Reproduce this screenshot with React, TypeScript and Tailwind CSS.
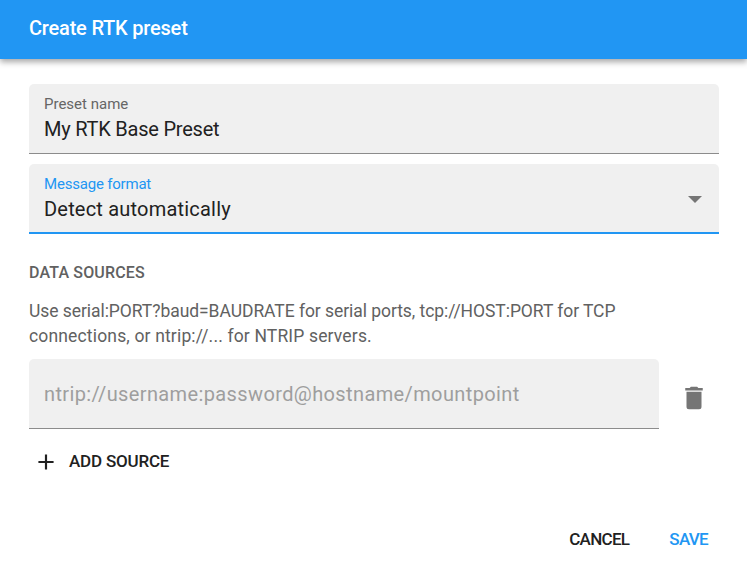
function Field({ label, value, focused, labelClass, valueClass }: { label: string; value: string; focused?: boolean; labelClass?: string; valueClass?: string }) {
  return (
    <div
      className={`h-[70px] rounded-t-[5px] bg-[#f0f0f0] px-[15px] pt-[10px] relative ${
        focused ? "border-b-2 border-[#2196f3]" : "border-b border-[#8c8c8c]"
      }`}
    >
      <div className={`text-[15px] leading-[20px] ${focused ? "text-[#2196f3]" : "text-[#666666]"} ${labelClass ?? ""}`}>{label}</div>
      <div className={`text-[20px] leading-[30px] text-[#212121] ${valueClass ?? ""}`}>{value}</div>
      {focused && <div className="absolute right-[17px] top-[32px] w-0 h-0 border-x-[7px] border-x-transparent border-t-[7px] border-t-[#757575]" />}
    </div>
  );
}

export default function App() {
  return (
    <div className="w-[747px] h-[573px] bg-white font-['Roboto',sans-serif] flex flex-col">
      <header className="h-[59px] shrink-0 bg-[#2196f3] shadow-[0_3px_6px_rgba(0,0,0,0.35)] px-[29px] pb-[3px] flex items-center">
        <h1 className="text-[20px] font-medium text-white tracking-[-0.2px]">Create RTK preset</h1>
      </header>

      <div className="flex flex-col px-[29px] pt-[25px]">
        <div className="flex flex-col gap-[10px] w-[690px]">
          <Field label="Preset name" value="My RTK Base Preset" valueClass="tracking-[-0.22px]" />
          <Field label="Message format" value="Detect automatically" focused labelClass="tracking-[-0.2px]" valueClass="tracking-[0.2px]" />
        </div>

        <h2 className="mt-[28px] text-[16px] leading-[22px] font-medium text-[#616161] tracking-[0.16px]">DATA SOURCES</h2>
        <p className="mt-[15px] text-[17.5px] leading-[25px] text-[#616161] w-[690px]">
          <span className="block tracking-[-0.06px]">Use serial:PORT?baud=BAUDRATE for serial ports, tcp://HOST:PORT for TCP</span>
          <span className="block tracking-[0.16px]">connections, or ntrip://... for NTRIP servers.</span>
        </p>

        <div className="mt-[10px] flex items-center">
          <div className="w-[630px] h-[70px] rounded-t-[5px] bg-[#f0f0f0] border-b border-[#8c8c8c] px-[15px] flex items-center">
            <span className="text-[20px] text-[#9e9e9e] tracking-[0.38px]">ntrip://username:password@hostname/mountpoint</span>
          </div>
          <button className="ml-[20px] mt-[8px] w-[30px] h-[30px] flex items-center justify-center">
            <svg viewBox="0 0 24 24" className="w-[30px] h-[30px] fill-[#757575]">
              <path d="M19,4H15.5L14.5,3H9.5L8.5,4H5V6H19M6,19A2,2 0 0,0 8,21H16A2,2 0 0,0 18,19V7H6V19Z" />
            </svg>
          </button>
        </div>

        <button className="mt-[18px] h-[30px] flex items-center gap-[10px] text-[17px] font-medium text-[#212121] self-start pl-[4px] tracking-[-0.2px]">
          <svg viewBox="0 0 24 24" className="w-[26px] h-[26px] fill-[#212121]">
            <path d="M19,13H13V19H11V13H5V11H11V5H13V11H19V13Z" />
          </svg>
          ADD SOURCE
        </button>

        <div className="mt-[50px] flex justify-end gap-[40px] pr-[10px] text-[17px] font-medium tracking-[-0.7px]">
          <button className="text-[#212121]">CANCEL</button>
          <button className="text-[#2196f3]">SAVE</button>
        </div>
      </div>
    </div>
  );
}
